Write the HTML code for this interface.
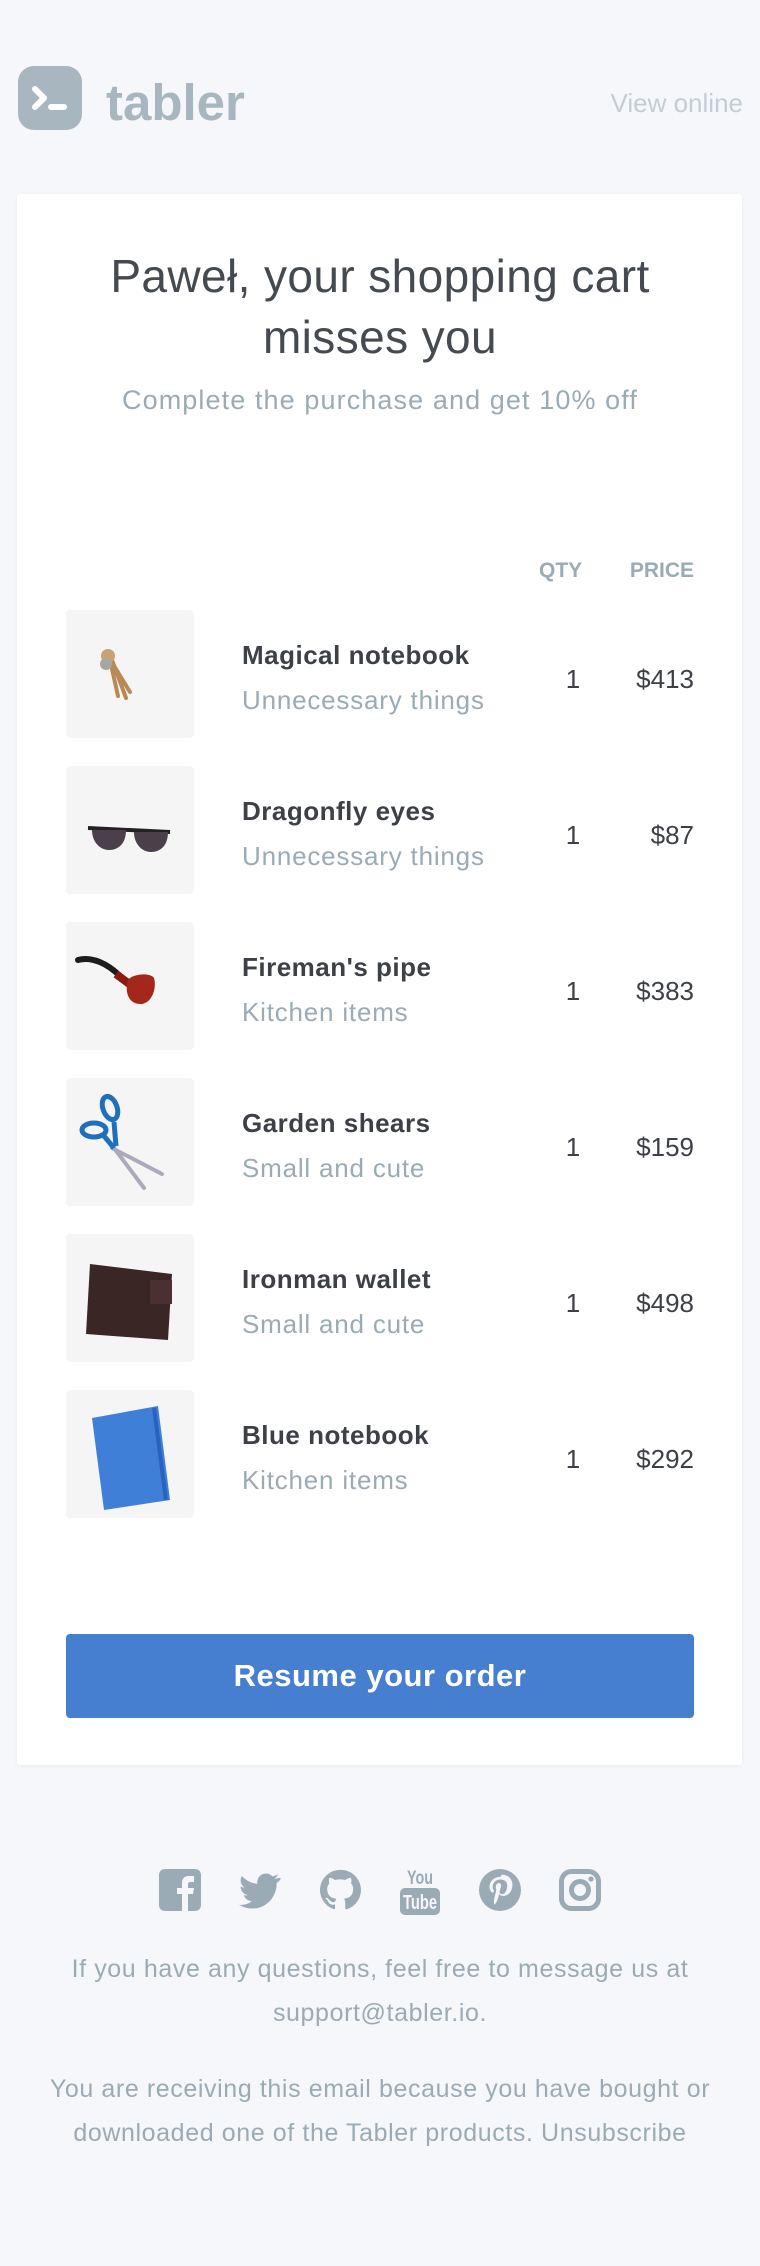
<!DOCTYPE html>
<html><head><meta charset="utf-8"><style>
*{margin:0;padding:0;box-sizing:border-box}
body{width:760px;height:2266px;background:#f5f7fb;font-family:"Liberation Sans",sans-serif;position:relative;overflow:hidden}
.a{position:absolute;white-space:nowrap}
.card{position:absolute;left:17px;top:194px;width:725px;height:1571px;background:#fff;border-radius:3px;box-shadow:0 1px 4px rgba(0,0,0,.05)}
.box{position:absolute;left:66px;width:128px;height:128px;background:#f5f5f5;border-radius:4px;overflow:hidden}
.nm{position:absolute;left:242px;font-size:26px;font-weight:bold;color:#3d4147;letter-spacing:0.5px}
.sb{position:absolute;left:242px;font-size:26px;color:#9aabb5;letter-spacing:0.8px}
.q{position:absolute;left:563px;width:20px;text-align:center;font-size:26px;color:#3d4147}
.p{position:absolute;right:66px;font-size:26px;color:#3d4147;text-align:right}
.mu{color:#9aabb5;font-size:25px;letter-spacing:0.6px;text-align:center;width:760px;left:0;line-height:44px}
</style></head><body>
<svg class="a" style="left:18px;top:66px" width="64" height="64" viewBox="0 0 64 64"><rect width="64" height="64" rx="16" fill="#a7b6bf"/><path d="M17 23l9 9-9 9" stroke="#fff" stroke-width="6" fill="none" stroke-linecap="round" stroke-linejoin="round"/><path d="M33 41h13" stroke="#fff" stroke-width="6" stroke-linecap="round"/></svg>
<div class="a" style="left:106px;top:73px;font-size:51px;font-weight:bold;color:#a7b6bf">tabler</div>
<div class="a" style="right:17px;top:88px;font-size:26px;color:#c4cdd3">View online</div>
<div class="card"></div>
<div class="a" style="left:0;width:760px;text-align:center;top:246px;font-size:46px;line-height:61px;color:#444a50;letter-spacing:0.4px;white-space:normal">Paweł, your shopping cart<br>misses you</div>
<div class="a" style="left:0;width:760px;text-align:center;top:385px;font-size:27px;letter-spacing:1.1px;color:#9aabb5">Complete the purchase and get 10% off</div>
<div class="a" style="left:539px;top:559px;font-size:21px;font-weight:bold;color:#9aabb5">QTY</div>
<div class="a" style="right:66px;top:559px;font-size:21px;font-weight:bold;color:#9aabb5">PRICE</div>

<div class="box" style="top:610px"><svg width="128" height="128"><g stroke="#b88a55" stroke-width="4" fill="none" stroke-linecap="round"><path d="M42 46l22 36M44 50l8 36M46 50l14 38"/></g><circle cx="42" cy="46" r="7" fill="#c9a274"/><circle cx="40" cy="54" r="6" fill="#a9a6a2"/></svg></div>
<div class="nm" style="top:640px">Magical notebook</div><div class="sb" style="top:685px">Unnecessary things</div><div class="q" style="top:664px">1</div><div class="p" style="top:664px">$413</div>

<div class="box" style="top:766px"><svg width="128" height="128"><path d="M22 62l82 4" stroke="#222" stroke-width="4"/><path d="M26 64h34c0 14-8 20-17 20S26 76 26 64z" fill="#4a3f4a"/><path d="M68 66h34c0 14-8 20-17 20S68 78 68 66z" fill="#4a3f4a"/></svg></div>
<div class="nm" style="top:796px">Dragonfly eyes</div><div class="sb" style="top:841px">Unnecessary things</div><div class="q" style="top:820px">1</div><div class="p" style="top:820px">$87</div>

<div class="box" style="top:922px"><svg width="128" height="128"><path d="M12 38c14-4 30 4 42 16" stroke="#1c1c1c" stroke-width="6" fill="none" stroke-linecap="round"/><path d="M50 52l16 12" stroke="#8b1a10" stroke-width="8"/><path d="M62 58c4-6 22-8 26-2 3 10-2 26-14 26-10 0-16-10-12-24z" fill="#a4281a"/></svg></div>
<div class="nm" style="top:952px">Fireman's pipe</div><div class="sb" style="top:997px">Kitchen items</div><div class="q" style="top:976px">1</div><div class="p" style="top:976px">$383</div>

<div class="box" style="top:1078px"><svg width="128" height="128"><path d="M46 70l50 26M48 70l30 40" stroke="#aab" stroke-width="4" stroke-linecap="round"/><ellipse cx="28" cy="52" rx="12" ry="7" fill="none" stroke="#1f6fbf" stroke-width="5"/><ellipse cx="44" cy="30" rx="7" ry="12" fill="none" stroke="#1f6fbf" stroke-width="5" transform="rotate(-20 44 30)"/><path d="M38 58l10 12M48 44l2 24" stroke="#1f6fbf" stroke-width="5"/></svg></div>
<div class="nm" style="top:1108px">Garden shears</div><div class="sb" style="top:1153px">Small and cute</div><div class="q" style="top:1132px">1</div><div class="p" style="top:1132px">$159</div>

<div class="box" style="top:1234px"><svg width="128" height="128"><path d="M24 30l82 10-4 66-82-6z" fill="#3b2626"/><path d="M84 46h22v24H84z" fill="#4a3030"/></svg></div>
<div class="nm" style="top:1264px">Ironman wallet</div><div class="sb" style="top:1309px">Small and cute</div><div class="q" style="top:1288px">1</div><div class="p" style="top:1288px">$498</div>

<div class="box" style="top:1390px"><svg width="128" height="128"><path d="M26 28l66-12 12 94-66 10z" fill="#3f7fd8"/><path d="M88 18l12 92" stroke="#2a62c0" stroke-width="4"/></svg></div>
<div class="nm" style="top:1420px">Blue notebook</div><div class="sb" style="top:1465px">Kitchen items</div><div class="q" style="top:1444px">1</div><div class="p" style="top:1444px">$292</div>

<div class="a" style="left:66px;top:1634px;width:628px;height:84px;background:#467fcf;border-radius:4px;color:#fff;font-size:31px;font-weight:bold;letter-spacing:0.5px;text-align:center;line-height:84px">Resume your order</div>

<svg class="a" style="left:159px;top:1869px" width="42" height="42" viewBox="0 0 42 42"><rect width="42" height="42" rx="6" fill="#9aabb5"/><path d="M23 42V25h-5v-6h5v-5c0-5 3-7 7-7h5v6h-4c-1 0-2 1-2 2v4h6l-1 6h-5v17z" fill="#f5f7fb"/></svg>
<svg class="a" style="left:239px;top:1869px" width="42" height="42" viewBox="0 0 24 24"><path fill="#9aabb5" d="M23 5c-1 .4-2 .6-3 .7 1-.6 2-1.6 2.3-2.7-1 .6-2 1-3.2 1.2A5 5 0 0 0 10.5 8.5 14 14 0 0 1 1.6 4a5 5 0 0 0 1.5 6.6c-.8 0-1.6-.3-2.2-.6 0 2.4 1.7 4.4 4 4.9-.8.2-1.5.2-2.2.1a5 5 0 0 0 4.6 3.4A10 10 0 0 1 0 20.4 14 14 0 0 0 7.5 22.600c9 0 14-7.5 14-14v-.6c1-.7 1.8-1.6 2.5-2.5z"/></svg>
<svg class="a" style="left:319px;top:1869px" width="42" height="42" viewBox="0 0 24 24"><path fill="#9aabb5" d="M12 .5a11.5 11.5 0 0 0-3.6 22.4c.6.1.8-.2.8-.6v-2c-3.2.7-3.9-1.5-3.9-1.5-.5-1.3-1.3-1.7-1.3-1.7-1-.7.1-.7.1-.7 1.2.1 1.8 1.2 1.8 1.2 1 1.8 2.7 1.3 3.4 1 .1-.8.4-1.3.7-1.6-2.6-.3-5.3-1.3-5.3-5.7 0-1.3.5-2.3 1.2-3.100-.1-.3-.5-1.500.1-3.1 0 0 1-.3 3.2 1.2a11 11 0 0 1 5.8 0c2.2-1.5 3.2-1.2 3.2-1.2.6 1.6.2 2.8.1 3.1.8.8 1.2 1.8 1.2 3.1 0 4.4-2.7 5.4-5.3 5.7.4.4.8 1.1.8 2.2v3.2c0 .3.2.7.8.6A11.5 11.5 0 0 0 12 .5z"/></svg>
<svg class="a" style="left:400px;top:1865px" width="40" height="50" viewBox="0 0 40 50"><text x="20" y="19" text-anchor="middle" font-family="Liberation Sans,sans-serif" font-weight="bold" font-size="19" fill="#9aabb5" textLength="26" lengthAdjust="spacingAndGlyphs">You</text><rect x="0" y="23" width="40" height="27" rx="5" fill="#9aabb5"/><text x="20" y="44" text-anchor="middle" font-family="Liberation Sans,sans-serif" font-weight="bold" font-size="20" fill="#f5f7fb" textLength="34" lengthAdjust="spacingAndGlyphs">Tube</text></svg>
<svg class="a" style="left:479px;top:1869px" width="42" height="42" viewBox="0 0 24 24"><circle cx="12" cy="12" r="12" fill="#9aabb5"/><path fill="#f5f7fb" d="M12.4 4.5c-4.3 0-6.4 3-6.4 5.6 0 1.6.6 2.9 1.8 3.4.2.1.4 0 .5-.2l.2-.7c.1-.2 0-.3-.1-.5-.4-.4-.6-1-.6-1.8 0-2.3 1.7-4.3 4.5-4.3 2.5 0 3.8 1.5 3.8 3.5 0 2.6-1.2 4.9-2.9 4.9-1 0-1.7-.8-1.4-1.8.3-1.1.8-2.4.8-3.2 0-.7-.4-1.4-1.2-1.400-1 0-1.8 1-1.8 2.4 0 .9.3 1.5.3 1.5l-1.2 5c-.3 1.4 0 3.2 0 3.4h.3c.1-.1 1.4-1.8 1.8-3.4l.7-2.7c.3.7 1.3 1.2 2.4 1.2 3.1 0 5.2-2.8 5.2-6.6 0-2.9-2.4-5.6-6.2-5.6z"/></svg>
<svg class="a" style="left:559px;top:1869px" width="42" height="42" viewBox="0 0 42 42"><rect x="2.5" y="2.5" width="37" height="37" rx="10" fill="none" stroke="#9aabb5" stroke-width="5"/><circle cx="21" cy="21" r="8.5" fill="none" stroke="#9aabb5" stroke-width="5"/><circle cx="32" cy="10" r="2.6" fill="#9aabb5"/></svg>

<div class="a mu" style="top:1947px">If you have any questions, feel free to message us at<br>support@tabler.io.</div>
<div class="a mu" style="top:2067px">You are receiving this email because you have bought or<br>downloaded one of the Tabler products. Unsubscribe</div>
</body></html>
